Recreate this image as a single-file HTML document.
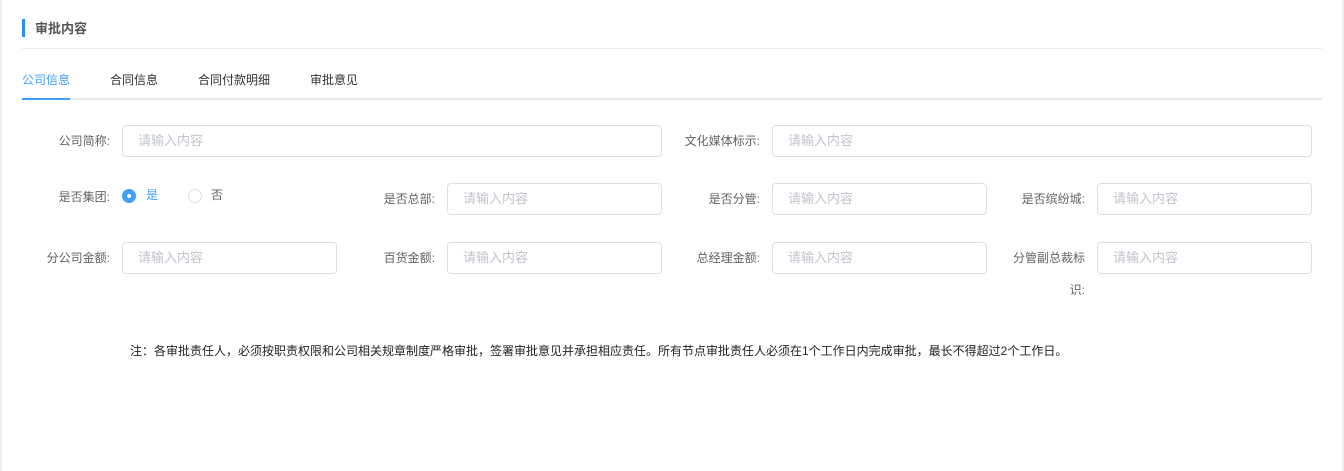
<!DOCTYPE html>
<html><head><meta charset="utf-8"><style>
*{margin:0;padding:0;box-sizing:border-box}
body{width:1344px;height:471px;background:#fff;position:relative;overflow:hidden;font-family:"Liberation Sans","Noto Sans CJK SC",sans-serif;font-size:12px}
.a{position:absolute}
.lbl{position:absolute;color:#606266;font-size:12px;text-align:right;line-height:32px}
.inp{position:absolute;height:32px;border:1px solid #dcdfe6;border-radius:4px;color:#c0c4cc;font-size:13px;line-height:30px;padding-left:15px}
</style></head><body>
<div class="a" style="left:0;top:0;width:2px;height:471px;background:#e9edf2"></div>
<div class="a" style="left:1342px;top:0;width:2px;height:471px;background:#e9edf2"></div>
<div class="a" style="left:22px;top:19px;width:3px;height:18px;background:#2d8cf0"></div>
<div class="a" style="left:35px;top:19px;line-height:19px;font-size:13px;font-weight:bold;color:#555">审批内容</div>
<div class="a" style="left:22px;top:48px;width:1300px;height:1px;background:#e8eaf1"></div>
<div class="a" style="left:22px;top:98px;width:1300px;height:2px;background:#e4e7ed"></div>
<div class="a" style="left:22px;top:98px;width:48px;height:2px;background:#409eff"></div>
<div class="a" style="left:22px;top:72px;line-height:17px;color:#409eff">公司信息</div>
<div class="a" style="left:110px;top:72px;line-height:17px;color:#303133">合同信息</div>
<div class="a" style="left:198px;top:72px;line-height:17px;color:#303133">合同付款明细</div>
<div class="a" style="left:310px;top:72px;line-height:17px;color:#303133">审批意见</div>

<div class="lbl" style="left:18px;width:92px;top:125px">公司简称:</div>
<div class="inp" style="left:122px;top:125px;width:540px">请输入内容</div>
<div class="lbl" style="left:658px;width:102px;top:125px">文化媒体标示:</div>
<div class="inp" style="left:772px;top:125px;width:540px">请输入内容</div>

<div class="lbl" style="left:18px;width:92px;top:181px">是否集团:</div>
<div class="a" style="left:122px;top:189px;width:14px;height:14px;border-radius:50%;background:#409eff"><div class="a" style="left:5px;top:5px;width:4px;height:4px;border-radius:50%;background:#fff"></div></div>
<div class="a" style="left:146px;top:187px;line-height:17px;color:#409eff">是</div>
<div class="a" style="left:188px;top:189px;width:14px;height:14px;border-radius:50%;border:1px solid #dcdfe6"></div>
<div class="a" style="left:211px;top:187px;line-height:17px;color:#606266">否</div>
<div class="lbl" style="left:338px;width:97px;top:183px">是否总部:</div>
<div class="inp" style="left:447px;top:183px;width:215px">请输入内容</div>
<div class="lbl" style="left:658px;width:102px;top:183px">是否分管:</div>
<div class="inp" style="left:772px;top:183px;width:215px">请输入内容</div>
<div class="lbl" style="left:988px;width:97px;top:183px">是否缤纷城:</div>
<div class="inp" style="left:1097px;top:183px;width:215px">请输入内容</div>

<div class="lbl" style="left:18px;width:92px;top:242px">分公司金额:</div>
<div class="inp" style="left:122px;top:242px;width:215px">请输入内容</div>
<div class="lbl" style="left:338px;width:97px;top:242px">百货金额:</div>
<div class="inp" style="left:447px;top:242px;width:215px">请输入内容</div>
<div class="lbl" style="left:658px;width:102px;top:242px">总经理金额:</div>
<div class="inp" style="left:772px;top:242px;width:215px">请输入内容</div>
<div class="lbl" style="left:988px;width:97px;top:242px">分管副总裁标</div>
<div class="lbl" style="left:988px;width:97px;top:274px">识:</div>
<div class="inp" style="left:1097px;top:242px;width:215px">请输入内容</div>

<div class="a" style="left:130px;top:342px;line-height:18px;color:#222">注：各审批责任人，必须按职责权限和公司相关规章制度严格审批，签署审批意见并承担相应责任。所有节点审批责任人必须在1个工作日内完成审批，最长不得超过2个工作日。</div>
</body></html>
